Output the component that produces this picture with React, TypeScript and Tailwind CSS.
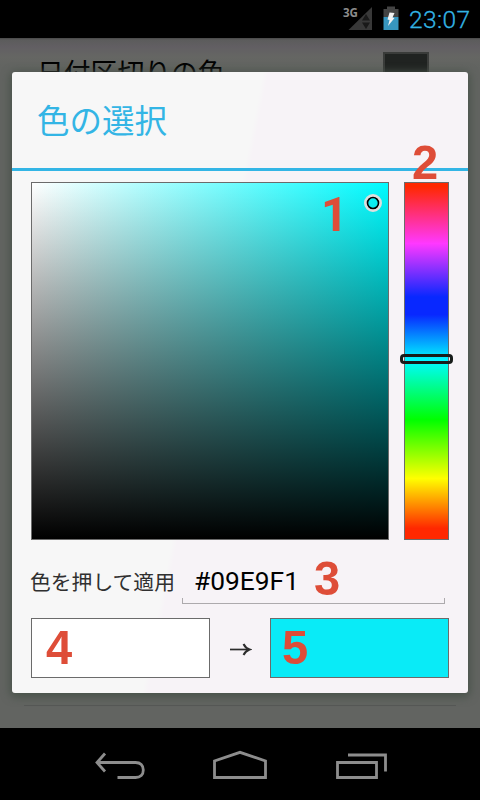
import React from "react";

const JP = "font-['Noto_Sans_CJK_JP',sans-serif]";

function StatusBar() {
  return (
    <header className="flex h-[38px] shrink-0 justify-end bg-black">
      <svg width="64" height="38" viewBox="340 0 64 38">
        <path d="M372 7V30H348.500Z" fill="#383838" />
        <path d="M362 20.500L366 14L370 20.500ZM362 22.500H370L366 29Z" fill="#191919" />
        <text x="343" y="17" fontSize="12.500" fontWeight="700" fontFamily="Open Sans, sans-serif" textLength="15" lengthAdjust="spacingAndGlyphs" fill="#8c8c8c">3G</text>
        <path d="M383.500 9H387V6.500H395V9H398.500V17H383.500Z" fill="#444" />
        <path d="M383.500 17H398.500V30H383.500Z" fill="#3796bf" />
        <path d="M389.500 12.500L394.500 13L392.500 17.500L394.500 18L388 26L389.500 20L387.500 19.500Z" fill="#f2f2f2" />
      </svg>
      <div className="w-[76px] pl-[5px] pt-[3px] font-['Roboto',sans-serif] font-light">
        <svg width="66" height="34" className="block overflow-visible">
          <text x="0" y="25" fill="#33b5e5" stroke="#33b5e5" strokeWidth="0.300" fontSize="24.500" textLength="61" lengthAdjust="spacing">23:07</text>
        </svg>
      </div>
    </header>
  );
}

function SettingsBehind() {
  return (
    <section className="flex h-[690px] shrink-0 flex-col justify-between overflow-hidden bg-[#626461] bg-[linear-gradient(#484848_0px,#5c5c5c_2px,#625f63_9px,#656663_19px,#626461_30px)]">
      <div className="flex justify-between pl-[37px] pr-[51px] pt-[14px]">
        <span className={`${JP} pt-[2px] text-[26.800px] leading-[36px] text-black`}>日付区切りの色</span>
        <div className="size-[46px] border-2 border-[#3a3c3a] bg-[#202321]" />
      </div>
      <div className="mx-6 mb-[22px] h-px bg-[#565856]" />
    </section>
  );
}

function NavigationBar() {
  return (
    <nav className="h-[72px] shrink-0 bg-black">
      <svg width="480" height="72" viewBox="0 728 480 72" fill="none" stroke="#8d8d8d">
        <path d="M105 753.500L97 762.500L105 771.500M98 762.500H135.500C140.500 762.500 143.300 765.500 143.300 770S140.500 777.500 135.500 777.500H117.500" strokeWidth="2.800" />
        <path d="M214.500 777.500V761L240 752.300L265.500 761V777.500Z" strokeWidth="2.800" />
        <path d="M337.500 762.500H376.500V777.500H337.500ZM348 755H385.500V771.500" strokeWidth="2.800" />
      </svg>
    </nav>
  );
}

function Marker({ n, place, face = "font-['Liberation_Sans',sans-serif]" }: { n: number; place: string; face?: string }) {
  return (
    <span className={`absolute ${face} origin-left scale-x-[0.96] text-[49px] font-bold leading-[50px] text-[#de4d38] ${place}`}>
      {n}
    </span>
  );
}

function ColorField() {
  return (
    <div className="relative size-[358px] border border-[#6b6b6b] bg-[linear-gradient(to_bottom,#fff,#000),linear-gradient(to_right,#fff,#00fbff)] bg-blend-multiply">
      <svg className="absolute left-[332px] top-[11px]" width="18" height="18" fill="none">
        <circle cx="9" cy="9" r="7.500" stroke="#dedfde" strokeWidth="3" />
        <circle cx="9" cy="9" r="5.500" stroke="#000" strokeWidth="1.600" />
      </svg>
      <Marker n={1} face="font-['Roboto',sans-serif]" place="left-[289px] top-[7px]" />
    </div>
  );
}

function HueBar() {
  return (
    <div className="relative h-[358px] w-[45px] border border-[#6b6b6b] bg-[linear-gradient(to_bottom,#ff2800_0%,#ff2800_1%,#ff38ff_17%,#0828ff_32%,#0828ff_37%,#00fbff_50%,#00ff00_66.500%,#ffff00_83%,#ff2800_97%,#ff2800_100%)]">
      <div className="absolute -left-[5px] top-[171px] h-[10px] w-[53px] rounded-[4px] border-[3px] border-[#181c1a]" />
      <Marker n={2} place="left-[7px] -top-[46px]" />
    </div>
  );
}

function ColorDialog() {
  return (
    <div className="absolute left-[12px] top-[72px] flex h-[621px] w-[456px] flex-col rounded-[3px] bg-[linear-gradient(101deg,#f7f7f7_43.500%,#f7f3f7_44.500%)] shadow-[0_2px_9px_2px_#49534a]">
      <h1 className={`${JP} h-[99px] shrink-0 border-b-[3px] border-[#33b5e5] pl-[25px] pt-[24px] text-[32.500px] leading-[46px] text-[#33b5e5]`}>
        色の選択
      </h1>
      <div className="flex justify-between pl-[19px] pr-[19px] pt-[11px]">
        <ColorField />
        <HueBar />
      </div>
      <div className="relative flex h-[78px] shrink-0 pl-[18px]">
        <span className={`${JP} w-[152px] shrink-0 pt-[26px] text-[20.800px] leading-[30px] text-[#303030]`}>色を押して適用</span>
        <div className="flex h-[64px] w-[263px] flex-col justify-end">
          <svg width="263" height="44" className="block">
            <text x="12" y="30" fontFamily="Roboto, sans-serif" fontSize="26.500" textLength="105" lengthAdjust="spacingAndGlyphs" fill="#000">#09E9F1</text>
          </svg>
          <div className="-mt-[6px] h-[6px] border-x border-b border-[#adaaad]" />
        </div>
        <Marker n={3} place="left-[302px] top-[13px]" />
      </div>
      <div className="flex items-center justify-between px-[19px]">
        <div className="relative h-[60px] w-[179px] border border-[#6b6b6b] bg-white">
          <Marker n={4} place="left-[14px] top-[3px]" />
        </div>
        <svg width="24" height="20" viewBox="228 640 24 20" fill="none" stroke="#2c2c2c">
          <path d="M230 651.500H249" strokeWidth="1.700" />
          <path d="M243.500 646Q245.500 650 249.500 651.500Q245.500 653 243.500 657" strokeWidth="2" />
        </svg>
        <div className="relative h-[60px] w-[179px] border border-[#6b6b6b] bg-[#09ebf7]">
          <Marker n={5} place="left-[11px] top-[3px]" />
        </div>
      </div>
    </div>
  );
}

export default function App() {
  return (
    <main className="relative flex h-[800px] w-[480px] flex-col overflow-hidden bg-black">
      <StatusBar />
      <SettingsBehind />
      <NavigationBar />
      <ColorDialog />
    </main>
  );
}
